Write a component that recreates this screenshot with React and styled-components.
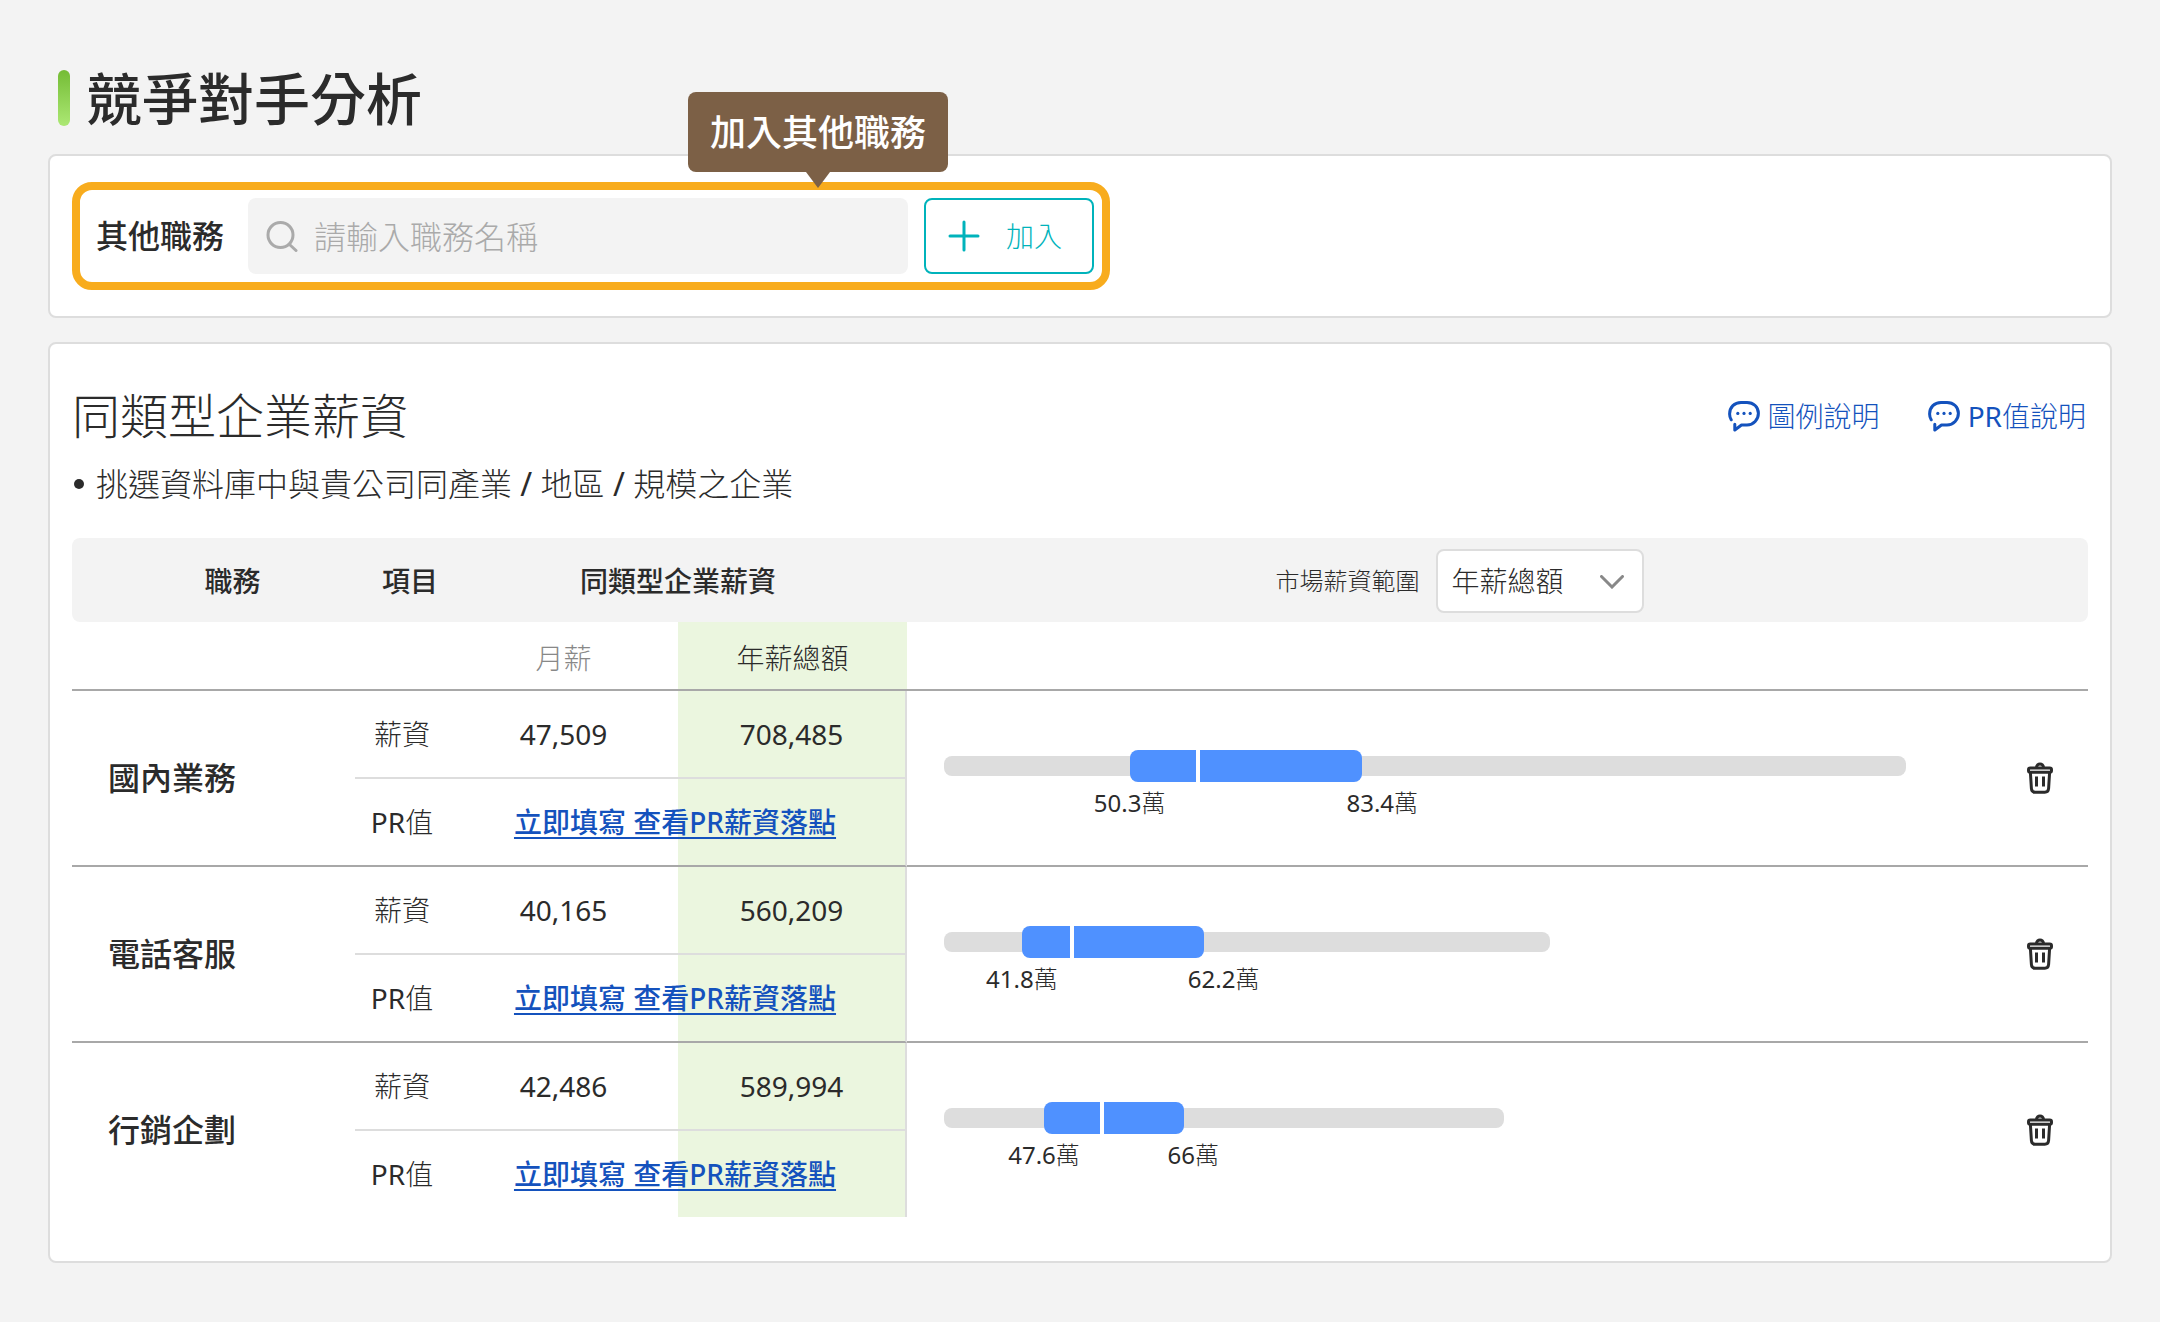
import React from "react";
import styled, { createGlobalStyle } from "styled-components";

const COLORS = {
  text: "#2b2b2b",
  muted: "#888888",
  placeholder: "#aaaaaa",
  surface: "#f3f3f3",
  line: "#dddddd",
  lineDark: "#a8a8a8",
  link: "#1452bd",
  teal: "#00b3bb",
  highlight: "#f8ac1d",
  tooltip: "#7c6046",
  green: "#ebf6df",
  bar: "#4f91ff",
};

const WEIGHTS = {
  light: 300,
  normal: 400,
  medium: 500,
};

const MONTHLY_WIDTH = 229;

// from, median, to and max are percentages of the chart width
const JOBS = [
  {
    name: "國內業務",
    monthly: "47,509",
    annual: "708,485",
    range: { from: 19.3, median: 26.4, to: 43.5, max: 100 },
    low: 50.3,
    high: 83.4,
  },
  {
    name: "電話客服",
    monthly: "40,165",
    annual: "560,209",
    range: { from: 8.1, median: 13.3, to: 27, max: 63 },
    low: 41.8,
    high: 62.2,
  },
  {
    name: "行銷企劃",
    monthly: "42,486",
    annual: "589,994",
    range: { from: 10.4, median: 16.4, to: 24.9, max: 58.2 },
    low: 47.6,
    high: 66,
  },
];

const App = () => {
  return (
    <Page>
      <GlobalStyle />
      <PageTitle>競爭對手分析</PageTitle>
      <Card>
        <SearchForm />
      </Card>
      <SalaryCard>
        <CardHeader>
          <CardTitle>同類型企業薪資</CardTitle>
          <HelpLinks>
            <HelpLink href="#legend">
              <BubbleIcon />
              <span>圖例說明</span>
            </HelpLink>
            <HelpLink href="#pr">
              <BubbleIcon />
              <span>
                <Latin>PR</Latin>值說明
              </span>
            </HelpLink>
          </HelpLinks>
        </CardHeader>
        <Description>
          挑選資料庫中與貴公司同產業<Latin> / </Latin>地區<Latin> / </Latin>規模之企業
        </Description>
        <SalaryTable />
      </SalaryCard>
    </Page>
  );
};

const SearchForm = () => {
  const [keyword, setKeyword] = React.useState("");

  return (
    <Form onSubmit={(event) => event.preventDefault()}>
      <FormLabel htmlFor="job-name">其他職務</FormLabel>
      <SearchBox>
        <SearchIcon />
        <SearchInput
          id="job-name"
          placeholder="請輸入職務名稱"
          value={keyword}
          onChange={(event) => setKeyword(event.target.value)}
        />
      </SearchBox>
      <AddButton type="submit">
        <PlusIcon />
        加入
      </AddButton>
      <Tooltip role="tooltip">加入其他職務</Tooltip>
    </Form>
  );
};

const SalaryTable = () => {
  return (
    <Table>
      <colgroup>
        <Col $width={283} />
        <Col $width={94} />
        <Col $width={MONTHLY_WIDTH} />
        <Col $width={229} />
        <col />
        <Col $width={96} />
      </colgroup>
      <thead>
        <tr>
          <HeadCell $indent={38}>職務</HeadCell>
          <HeadCell $indent={16}>項目</HeadCell>
          <HeadCell colSpan={2}>同類型企業薪資</HeadCell>
          <HeadCell $indent={20}>
            <RangePicker>
              <RangeLabel htmlFor="range-type">市場薪資範圍</RangeLabel>
              <SelectWrapper>
                <Select id="range-type" defaultValue="annual">
                  <option value="annual">年薪總額</option>
                  <option value="monthly">月薪</option>
                </Select>
                <ChevronIcon />
              </SelectWrapper>
            </RangePicker>
          </HeadCell>
          <HeadCell />
        </tr>
        <tr>
          <SubHeadCell colSpan={2} />
          <SubHeadCell>月薪</SubHeadCell>
          <SubHeadCell $active>年薪總額</SubHeadCell>
          <SubHeadCell colSpan={2} />
        </tr>
      </thead>
      <tbody>
        {JOBS.map((job) => (
          <JobRows key={job.name} job={job} />
        ))}
      </tbody>
    </Table>
  );
};

const JobRows = ({ job }) => {
  return (
    <>
      <JobRow>
        <NameCell rowSpan={2}>{job.name}</NameCell>
        <ItemCell>薪資</ItemCell>
        <MonthlyCell>{job.monthly}</MonthlyCell>
        <AnnualCell>{job.annual}</AnnualCell>
        <ChartCell rowSpan={2}>
          <RangeChart range={job.range} low={job.low} high={job.high} />
        </ChartCell>
        <ActionCell rowSpan={2}>
          <IconButton aria-label={`刪除${job.name}`}>
            <TrashIcon />
          </IconButton>
        </ActionCell>
      </JobRow>
      <PrRow>
        <ItemCell>
          <Latin>PR</Latin>值
        </ItemCell>
        <PrCell colSpan={2}>
          <PrLink href="#fill">立即填寫 查看PR薪資落點</PrLink>
        </PrCell>
      </PrRow>
    </>
  );
};

const RangeChart = ({ range, low, high }) => {
  return (
    <Chart>
      <Track style={{ width: `${range.max}%` }} />
      <Bar style={{ left: `${range.from}%`, width: `${range.to - range.from}%` }} />
      <Median style={{ left: `${range.median}%` }} />
      <LowLabel style={{ left: `${range.from}%` }}>
        <Latin>{low}</Latin>萬
      </LowLabel>
      <HighLabel style={{ left: `${range.to}%` }}>
        <Latin>{high}</Latin>萬
      </HighLabel>
    </Chart>
  );
};

const SearchIcon = () => (
  <svg width="32" height="32" viewBox="0 0 32 32" fill="none" stroke={COLORS.placeholder} strokeWidth="3" strokeLinecap="round">
    <circle cx="14.5" cy="15" r="12.5" />
    <path d="M23.5 24.5L30 30.5" />
  </svg>
);

const PlusIcon = () => (
  <svg width="32" height="32" viewBox="0 0 32 32" fill="none" stroke="currentColor" strokeWidth="3" strokeLinecap="round">
    <path d="M16 2V30M2 16H30" />
  </svg>
);

const BubbleIcon = () => (
  <svg width="32" height="32" viewBox="0 0 32 32" fill="none" stroke="currentColor" strokeWidth="3" strokeLinecap="round" strokeLinejoin="round">
    <path d="M3.2 19.8C2 17.8 1.6 16 1.6 14C1.6 7 6.5 2.4 13 2.4H19C25.5 2.4 30.4 7 30.4 13.2C30.4 19.5 25.5 25 19 25H13.5L6.8 30V24.2" />
    <g fill="currentColor" stroke="none">
      <circle cx="9.8" cy="13.4" r="1.6" />
      <circle cx="16" cy="13.4" r="1.6" />
      <circle cx="22.2" cy="13.4" r="1.6" />
    </g>
  </svg>
);

const ChevronIcon = () => (
  <svg width="24" height="14" viewBox="0 0 24 14" fill="none" stroke={COLORS.muted} strokeWidth="3" strokeLinecap="round">
    <path d="M1.5 1.5L12 12L22.5 1.5" />
  </svg>
);

const TrashIcon = () => (
  <svg width="26" height="32" viewBox="0 0 26 32" fill="none" stroke={COLORS.text} strokeWidth="3">
    <path d="M9.5 5.5C9.5 0.8 16.5 0.8 16.5 5.5" />
    <rect x="1.5" y="5.9" width="23" height="4.4" rx="1.8" />
    <path d="M3.4 10.3L4.4 26.5C4.6 29 5.8 30.3 8.2 30.3H17.8C20.2 30.3 21.4 29 21.6 26.5L22.6 10.3" />
    <path d="M9.5 14.5V24.5M16.5 14.5V24.5" />
  </svg>
);

const GlobalStyle = createGlobalStyle`
  *,
  *::before,
  *::after {
    box-sizing: border-box;
  }

  body {
    margin: 0;
    background: ${COLORS.surface};
    color: ${COLORS.text};
    font-family: "Noto Sans", "Noto Sans CJK TC", sans-serif;
    font-size: 28px;
    font-weight: ${WEIGHTS.light};
    line-height: 40px;
  }

  input,
  select,
  button {
    font: inherit;
    color: inherit;
  }

  svg {
    display: block;
    flex-shrink: 0;
  }
`;

// Latin letters and digits look too thin beside the light Chinese weight
const Latin = styled.span`
  font-weight: ${WEIGHTS.normal};
`;

const Page = styled.main`
  padding: 70px 48px 60px;
`;

const PageTitle = styled.h1`
  display: flex;
  align-items: center;
  gap: 16px;
  margin: 0 0 28px;
  padding-left: 10px;
  font-size: 56px;
  font-weight: ${WEIGHTS.medium};
  line-height: 56px;

  &::before {
    content: "";
    width: 12px;
    height: 56px;
    border-radius: 6px;
    background: linear-gradient(#74bc35, #ace874);
  }
`;

const Card = styled.section`
  padding: 26px 22px;
  border: 2px solid ${COLORS.line};
  border-radius: 8px;
  background: white;
`;

const SalaryCard = styled(Card)`
  margin-top: 24px;
  padding-top: 40px;
  padding-bottom: 44px;
`;

const Form = styled.form`
  position: relative;
  display: flex;
  align-items: center;
  width: fit-content;
  max-width: 100%;
  padding: 8px 8px 8px 16px;
  border: 8px solid ${COLORS.highlight};
  border-radius: 20px;
`;

const FormLabel = styled.label`
  margin-right: 24px;
  font-size: 32px;
  font-weight: ${WEIGHTS.medium};
  white-space: nowrap;
`;

const SearchBox = styled.div`
  display: flex;
  align-items: center;
  gap: 16px;
  flex: 0 1 660px;
  width: 660px;
  height: 76px;
  margin-right: 16px;
  padding: 0 18px;
  border-radius: 8px;
  background: ${COLORS.surface};
`;

const SearchInput = styled.input`
  flex: 1;
  min-width: 0;
  height: 48px;
  padding: 0;
  border: none;
  outline: none;
  background: transparent;
  font-size: 32px;

  &::placeholder {
    color: ${COLORS.placeholder};
    opacity: 1;
  }
`;

const AddButton = styled.button`
  display: flex;
  align-items: center;
  gap: 26px;
  height: 76px;
  padding: 0 30px 0 22px;
  border: 2px solid ${COLORS.teal};
  border-radius: 8px;
  background: white;
  color: ${COLORS.teal};
  white-space: nowrap;
  cursor: pointer;
`;

const Tooltip = styled.div`
  position: absolute;
  right: 154px;
  bottom: calc(100% + 18px);
  padding: 2px 22px 0;
  border-radius: 8px;
  background: ${COLORS.tooltip};
  color: white;
  font-size: 36px;
  font-weight: ${WEIGHTS.medium};
  line-height: 78px;
  white-space: nowrap;

  &::after {
    content: "";
    position: absolute;
    top: 100%;
    left: 50%;
    transform: translateX(-50%);
    border: 12px solid transparent;
    border-top: 16px solid ${COLORS.tooltip};
    border-bottom: none;
  }
`;

const CardHeader = styled.header`
  display: flex;
  align-items: center;
  justify-content: space-between;
`;

const CardTitle = styled.h2`
  margin: 0;
  font-size: 48px;
  font-weight: ${WEIGHTS.light};
  line-height: 64px;
`;

const HelpLinks = styled.nav`
  display: flex;
  gap: 48px;
  padding-right: 2px;
`;

const HelpLink = styled.a`
  display: flex;
  align-items: center;
  gap: 8px;
  color: ${COLORS.link};
  text-decoration: none;
`;

const Description = styled.p`
  display: flex;
  align-items: center;
  margin: 12px 0 30px;
  font-size: 32px;
  line-height: 48px;
  white-space: pre;

  &::before {
    content: "";
    width: 10px;
    height: 10px;
    margin: 0 12px 0 2px;
    border-radius: 50%;
    background: ${COLORS.text};
  }
`;

const Table = styled.table`
  width: 100%;
  table-layout: fixed;
  border-collapse: separate;
  border-spacing: 0;
  text-align: center;
`;

const Col = styled.col`
  width: ${(props) => props.$width}px;
`;

const HeadCell = styled.th`
  height: 84px;
  padding: 2px 0 0;
  padding-left: ${(props) => props.$indent || 0}px;
  background: ${COLORS.surface};
  font-weight: ${WEIGHTS.medium};

  &:first-of-type {
    border-radius: 8px 0 0 8px;
  }

  &:last-of-type {
    border-radius: 0 8px 8px 0;
  }
`;

const RangePicker = styled.div`
  display: flex;
  align-items: center;
  justify-content: center;
  gap: 16px;
  font-weight: ${WEIGHTS.light};
`;

const RangeLabel = styled.label`
  font-size: 24px;
`;

const SelectWrapper = styled.div`
  position: relative;

  svg {
    position: absolute;
    top: 26px;
    right: 20px;
    pointer-events: none;
  }
`;

const Select = styled.select`
  display: block;
  width: 208px;
  height: 64px;
  padding: 0 14px;
  appearance: none;
  border: 2px solid ${COLORS.line};
  border-radius: 8px;
  background: white;
`;

const SubHeadCell = styled.th`
  height: 69px;
  padding: 4px 0 0;
  border-bottom: 2px solid ${COLORS.lineDark};
  background: ${(props) => (props.$active ? COLORS.green : "transparent")};
  color: ${(props) => (props.$active ? COLORS.text : COLORS.muted)};
  font-weight: ${WEIGHTS.light};
`;

const Cell = styled.td`
  padding: 0;
`;

const ItemCell = styled(Cell)``;

const MonthlyCell = styled(Cell)`
  font-weight: ${WEIGHTS.normal};
`;

const AnnualCell = styled(MonthlyCell)`
  border-right: 2px solid ${COLORS.line};
  background: ${COLORS.green};
`;

const NameCell = styled(Cell)`
  padding-left: 36px;
  font-size: 32px;
  font-weight: ${WEIGHTS.medium};
  text-align: left;
`;

const ChartCell = styled(Cell)`
  padding: 0 86px 0 37px;
`;

const ActionCell = styled(Cell)``;

// spans the monthly and annual columns, tinted under the annual one only
const PrCell = styled(Cell)`
  padding-right: 4px;
  border-right: 2px solid ${COLORS.line};
  background: linear-gradient(
    to right,
    transparent ${MONTHLY_WIDTH}px,
    ${COLORS.green} ${MONTHLY_WIDTH}px
  );
`;

const JobRow = styled.tr`
  height: 88px;

  ${ItemCell}, ${MonthlyCell}, ${AnnualCell} {
    border-bottom: 2px solid ${COLORS.line};
  }

  &:not(:nth-last-of-type(2)) {
    ${NameCell}, ${ChartCell}, ${ActionCell} {
      border-bottom: 2px solid ${COLORS.lineDark};
    }
  }
`;

const PrRow = styled.tr`
  height: 88px;

  &:last-of-type {
    height: 86px;
  }

  &:not(:last-of-type) > td {
    border-bottom: 2px solid ${COLORS.lineDark};
  }
`;

const PrLink = styled.a`
  color: ${COLORS.link};
  font-weight: ${WEIGHTS.medium};
  text-decoration: underline;
  text-decoration-thickness: 2px;
  text-underline-offset: 4px;
`;

const Chart = styled.div`
  position: relative;
  height: 56px;
  padding-top: 6px;
  font-size: 24px;
  line-height: 32px;
`;

const Track = styled.div`
  height: 20px;
  border-radius: 8px;
  background: ${COLORS.line};
`;

const Bar = styled.div`
  position: absolute;
  top: 0;
  height: 32px;
  border-radius: 8px;
  background: ${COLORS.bar};
`;

const Median = styled.div`
  position: absolute;
  top: 0;
  width: 4px;
  height: 32px;
  transform: translateX(-50%);
  background: white;
`;

const LowLabel = styled.span`
  position: absolute;
  top: 37px;
  transform: translateX(-50%);
`;

const HighLabel = styled.span`
  position: absolute;
  top: 37px;
  margin-left: -16px;
`;

const IconButton = styled.button`
  display: block;
  margin: 0 auto;
  padding: 0;
  border: none;
  background: transparent;
  cursor: pointer;
`;

export default App;
